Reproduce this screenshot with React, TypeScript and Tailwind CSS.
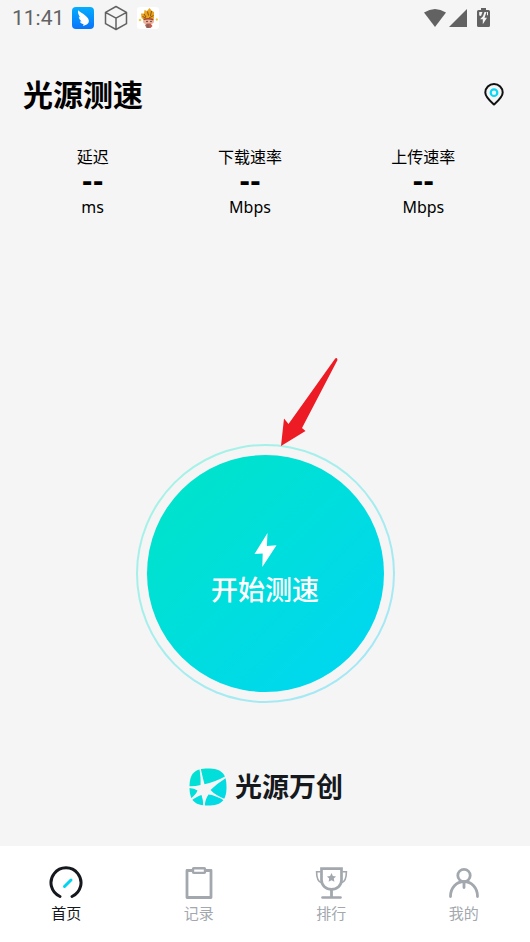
import React from "react";

type Stat = {
    label: string,
    value: string,
    unit: string
}

type Tab = {
    label: string,
    icon: React.ReactNode,
    active?: boolean
}

const stats: Stat[] = [
    { label: '延迟', value: '--', unit: 'ms' },
    { label: '下载速率', value: '--', unit: 'Mbps' },
    { label: '上传速率', value: '--', unit: 'Mbps' }
]

const HomeIcon = () => <svg width="34" height="34" viewBox="0 0 34 34" fill="none" strokeLinecap="round">
    <path d="M11 30.5a15 15 0 1 1 12 0" stroke="#15181d" strokeWidth="3" />
    <path d="M15.5 20.5l6.500-6.500" stroke="#00d5ee" strokeWidth="3" />
</svg>

const RecordIcon = () => <svg width="34" height="34" viewBox="0 0 34 34" fill="none" stroke="#a2a8ae" strokeWidth="2.8" strokeLinejoin="round">
    <path d="M11 4.500H5v27h24v-27H23" />
    <rect x="11" y="2.300" width="12" height="4.600" rx="0.8" strokeWidth="2.400" />
</svg>

const RankIcon = () => <svg width="34" height="34" viewBox="0 0 34 34" fill="none" stroke="#a2a8ae">
    <path d="M7.5 2.600h20v11.400c0 5.400-4.400 9.400-10 9.400S7.500 19.400 7.500 14z" strokeWidth="2.7" />
    <path d="M6.500 5.700H2.600c0 6 .9 9.900 4.900 11M28.500 5.700h3.900c0 6-.9 9.900-4.900 11" strokeWidth="1.6" />
    <path d="M17.500 24v7" strokeWidth="2.8" />
    <path d="M8.500 31.500h18" strokeWidth="2.6" strokeLinecap="round" />
    <path d="M17.500 7l1.400 3 3.200.4-2.300 2.200.6 3.200-2.900-1.600-2.900 1.600.6-3.200-2.300-2.200 3.200-.4z" fill="#a2a8ae" stroke="none" />
</svg>

const MineIcon = () => <svg width="34" height="34" viewBox="0 0 34 34" fill="none" stroke="#a2a8ae" strokeWidth="2.800" strokeLinecap="round">
    <circle cx="17" cy="9.500" r="6.200" />
    <path d="M3.500 30.500c0-9 6-14.800 13.500-14.800s13.500 5.800 13.500 14.800M17 16v5.500" />
</svg>

const tabs: Tab[] = [
    { label: '首页', icon: <HomeIcon />, active: true },
    { label: '记录', icon: <RecordIcon /> },
    { label: '排行', icon: <RankIcon /> },
    { label: '我的', icon: <MineIcon /> }
]

const StatusBar = () => <div className="flex h-9 items-center justify-between pr-10 pl-3 text-[#626262]">
    <div className="flex items-center">
        <span className="w-[60px] pt-0.5 font-['Roboto',sans-serif] text-[21px]">11:41</span>
        <svg width="22" height="22" viewBox="0 0 22 22">
            <defs>
                <linearGradient id="wing" x1="0" y1="0" x2="0" y2="1">
                    <stop stopColor="#05aefd" />
                    <stop offset="1" stopColor="#0873fb" />
                </linearGradient>
            </defs>
            <rect width="22" height="22" rx="4" fill="url(#wing)" />
            <path d="M6 3.200c2 2 4.500 2.800 7 5 2.800 2.300 4.300 4.300 3.800 6.600-.3 1.400-1.300 2.300-2.600 2.900l-3.200 1.300.6-1.800c-2-.4-3.200-1.400-3.800-2.700l1.700-.1C7.900 13 7 11.500 6.700 9.800l1.500.6C6.600 8.200 5.700 5.800 6 3.200z" fill="#fff" />
        </svg>
        <svg className="ml-[10px]" width="24" height="26" viewBox="0 0 24 26" fill="none" stroke="currentColor" strokeWidth="1.500" strokeLinejoin="round">
            <path d="M12 1.500l10.500 5.800v11.400L12 24.500 1.500 18.700V7.300zM1.500 7.300L12 13.200l10.500-5.900M12 13.200v11.300" />
        </svg>
        <svg className="ml-[9px]" width="22" height="22" viewBox="0 0 22 22">
            <rect width="22" height="22" rx="3" fill="#fff" />
            <path d="M4.500 11L4 6.500 7 6.500l.5-3.500 2.500 1L12.500 1l2 2.500 2.500 1.500 0 6.500-4 2H8z" fill="#e9a51f" />
            <path d="M7 7l2 3M10.500 4.500l1 4M14.500 4l-1 5M5.500 9.500l3.500 1.500M12 11l4.500-2.500" stroke="#8f5214" strokeWidth="1" />
            <ellipse cx="11.500" cy="14.500" rx="5.500" ry="3.200" fill="#e9b59e" />
            <path d="M6.500 12.500q5-1.500 10 .2" stroke="#a4482c" strokeWidth="1.500" fill="none" />
            <path d="M8 18l2-1.500h3.500l2 2.500-2 2h-4z" fill="#d05647" />
            <path d="M10 17.500h2v3h-2z" fill="#477a80" />
            <path d="M1.500 13l1.500-1.500L4.500 13 3 14.500zM18.500 12.500l1.500-1.500 1 1.500-1 1.500z" fill="#f2c23d" />
            <circle cx="10" cy="14.500" r="0.8" fill="#58303a" />
            <circle cx="14" cy="14.500" r="0.8" fill="#58303a" />
        </svg>
    </div>
    <div className="flex items-center">
        <svg width="22" height="18" viewBox="0 0 22 18" fill="currentColor">
            <path d="M0 3.600Q11-3.600 22 3.600L11 18z" />
        </svg>
        <svg className="ml-[3px]" width="18" height="18" viewBox="0 0 18 18" fill="currentColor">
            <path d="M18 0v18H0z" />
        </svg>
        <svg className="ml-[10px]" width="13" height="20" viewBox="0 0 13 20" fill="currentColor">
            <path fillRule="evenodd" d="M4 0h5v2h2.500Q13 2 13 3.500v14q0 1.500-1.500 1.500h-10Q0 19 0 17.500v-14Q0 2 1.500 2H4zM2.200 4v3.500l1.800.5 1.500-4zM7.500 4L6 8.200l-3 3h2.800v5L10 9.700H7.500L9.500 4zM10 4v3.500l1-.5V4z" />
        </svg>
    </div>
</div>

const BrandLogo = () => <svg width="38" height="38" viewBox="0 0 38 38">
    <defs>
        <linearGradient id="brand" x1="0" y1="0" x2="1" y2="1">
            <stop stopColor="#02e3ce" />
            <stop offset="1" stopColor="#02d8eb" />
        </linearGradient>
    </defs>
    <path d="M19 .5C32.500 .5 37.500 5.500 37.500 19S32.500 37.500 19 37.500.5 32.500.5 19 5.500 .5 19 .5z" fill="url(#brand)" />
    <path d="M11.600 0Q13.800 10 15.500 16.200Q25 14.500 38 7.500V9.200Q28 15.500 21.500 22Q26.500 27.500 37 31.500L36 33Q26 27 19.500 26.500Q16 31.500 15.800 38H14.300Q14.300 32 12.500 27Q8.500 28 2.300 32.500L1.300 31Q7 26.500 8.500 22.500Q5.500 20.200 0 20V18.300Q6 18.600 11.500 17Q12 10 10.300 0z" fill="#f5f5f5" />
</svg>

export default function App() {
    return <div className="flex min-h-screen flex-col bg-[#f5f5f5] font-['Noto_Sans','Noto_Sans_CJK_SC',sans-serif] text-black">
        <StatusBar />
        <header className="mt-8 flex h-[52px] items-center justify-between pr-[25px] pl-[23px]">
            <h1 className="text-[30px] font-bold">光源测速</h1>
            <button aria-label="定位">
                <svg width="22" height="24" viewBox="0 0 22 24" fill="none">
                    <path d="M11 22.500C6.800 18.700 2.300 15 2.300 10.500a8.700 8.500 0 0 1 17.400 0c0 4.500-4.500 8.200-8.700 12z" stroke="#111" strokeWidth="2" strokeLinejoin="round" />
                    <circle cx="11" cy="10.700" r="3.300" stroke="#08d8f5" strokeWidth="2.200" />
                </svg>
            </button>
        </header>

        <dl className="mt-[25px] flex justify-around pr-5 pl-[22px] text-center">
            {stats.map(stat =>
                <div key={stat.label} className="leading-[25px]">
                    <dt>{stat.label}</dt>
                    <dd className="font-['DejaVu_Sans',sans-serif] text-[26px] leading-[25px] font-bold">{stat.value}</dd>
                    <dd>{stat.unit}</dd>
                </div>
            )}
        </dl>

        <main className="flex flex-1 flex-col items-center justify-end pb-10">
            <div className="relative">
                <div className="rounded-full bg-linear-to-br from-[#a5f4e4] to-[#a5e6f8] p-[2px]">
                    <div className="rounded-full bg-[#f5f5f5] p-[9px]">
                        <button className="flex size-[237px] flex-col items-center justify-center rounded-full bg-linear-to-br from-[#00e5c5] to-[#00d5f5] text-[27px] leading-9 font-medium text-white">
                            <svg className="mb-1" width="24" height="36" viewBox="0 0 24 36" fill="currentColor">
                                <path d="M14.500 1L1.500 22l8.200-.4L9.300 35 23.500 13.200l-9.600.8z" />
                            </svg>
                            <span className="mb-2">开始测速</span>
                        </button>
                    </div>
                </div>
                <svg className="absolute -top-[87px] left-36" width="60" height="90" viewBox="0 0 60 90" fill="#ed1c24">
                    <path d="M54.500 2.500Q57-.5 57.500 3L22 71 25.500 74 1 89 4 61.500 8.500 67z" />
                </svg>
            </div>
            <div className="mt-[65px] flex items-center gap-2 pl-0.5">
                <BrandLogo />
                <span className="text-[27px] leading-[38px] font-bold text-[#15181d]">光源万创</span>
            </div>
        </main>

        <nav className="grid h-24 grid-cols-4 bg-white">
            {tabs.map(tab =>
                <a
                    key={tab.label}
                    href="#"
                    className={tab.active
                        ? "flex flex-col items-center pt-5 text-[15px] leading-[26px] text-[#15181d]"
                        : "flex flex-col items-center pt-5 text-[15px] leading-[26px] text-[#a2a8ae]"}
                >
                    {tab.icon}
                    <span>{tab.label}</span>
                </a>
            )}
        </nav>
    </div>
}
